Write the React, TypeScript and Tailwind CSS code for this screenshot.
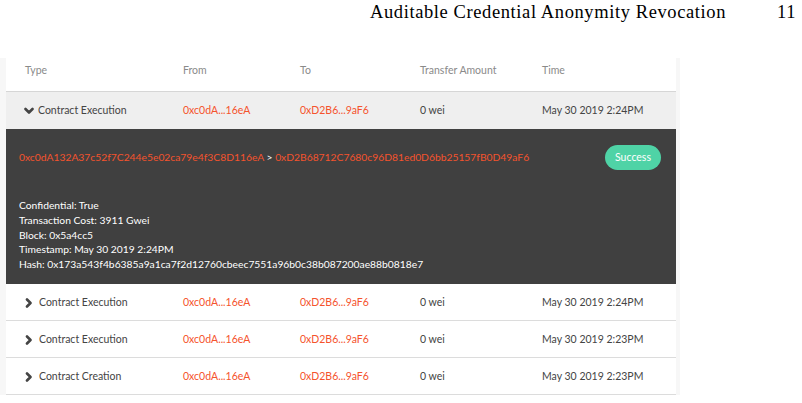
import React from "react";

const font = { fontFamily: "Lato, 'Open Sans', sans-serif" };

function ChevronDown() {
  return (
    <svg width="10" height="8" viewBox="0 0 10 8" className="mr-[4px]">
      <polyline points="1.5,2 5,5.5 8.5,2" fill="none" stroke="#444" strokeWidth="2.6" strokeLinecap="round" strokeLinejoin="round" />
    </svg>
  );
}
function ChevronRight() {
  return (
    <svg width="8" height="10" viewBox="0 0 8 10" className="mr-[6px]">
      <polyline points="2,1.5 5.5,5 2,8.5" fill="none" stroke="#444" strokeWidth="2.6" strokeLinecap="round" strokeLinejoin="round" />
    </svg>
  );
}

type Row = { type: string; time: string };
const rows: Row[] = [
  { type: "Contract Execution", time: "May 30 2019 2:24PM" },
  { type: "Contract Execution", time: "May 30 2019 2:23PM" },
  { type: "Contract Creation", time: "May 30 2019 2:23PM" },
];

const cols = "grid grid-cols-[158px_117px_120px_122px_1fr] items-center pl-[19px]";

export default function App() {
  return (
    <div className="w-[802px] h-[403px] bg-white overflow-hidden relative" style={font}>
      <div className="h-[58px] flex items-start">
        <div
          className="ml-[370px] -mt-[1px] flex text-[18.5px] tracking-[0.6px] text-black"
          style={{ fontFamily: "'Liberation Serif', 'DejaVu Serif', serif" }}
        >
          <span className="w-[407px]">Auditable Credential Anonymity Revocation</span>
          <span>11</span>
        </div>
      </div>
      <div className="w-[680px] bg-[#f7f7f7] pl-[6px] pr-[4px]">
        <div className="bg-white text-[10.5px]">
          <div className={`${cols} h-[34px] pb-[8px] text-[#8a8a8a] border-b border-[#d6d6d6]`}>
            <span>Type</span>
            <span>From</span>
            <span>To</span>
            <span>Transfer Amount</span>
            <span>Time</span>
          </div>
          <div className={`${cols} h-[37px] pt-[1px] bg-[#efefef] text-[#444]`}>
            <span className="flex items-center -ml-[1px]">
              <ChevronDown />
              Contract Execution
            </span>
            <span className="text-[#f5532d]">0xc0dA...16eA</span>
            <span className="text-[#f5532d]">0xD2B6...9aF6</span>
            <span>0 wei</span>
            <span>May 30 2019 2:24PM</span>
          </div>
          <div className="bg-[#404040] h-[155px] pl-[13px] pr-[15px] pt-[16px] text-white text-[10.3px]">
            <div className="flex items-center justify-between h-[25px]">
              <span className="text-[#f5532d]">
                0xc0dA132A37c52f7C244e5e02ca79e4f3C8D116eA <span className="text-white">&gt;</span> 0xD2B68712C7680c96D81ed0D6bb25157fB0D49aF6
              </span>
              <span className="bg-[#4fd3a6] rounded-full h-[25px] w-[56px] flex items-center justify-center text-[10.5px] text-white">
                Success
              </span>
            </div>
            <div className="mt-[28px] flex flex-col leading-[14.8px]">
              <span>Confidential: True</span>
              <span>Transaction Cost: 3911 Gwei</span>
              <span>Block: 0x5a4cc5</span>
              <span>Timestamp: May 30 2019 2:24PM</span>
              <span>Hash: 0x173a543f4b6385a9a1ca7f2d12760cbeec7551a96b0c38b087200ae88b0818e7</span>
            </div>
          </div>
          {rows.map((r, i) => (
            <div key={i} className={`${cols} h-[37px] pt-[2px] text-[#444] border-b border-[#dcdcdc]`}>
              <span className="flex items-center">
                <ChevronRight />
                {r.type}
              </span>
              <span className="text-[#f5532d]">0xc0dA...16eA</span>
              <span className="text-[#f5532d]">0xD2B6...9aF6</span>
              <span>0 wei</span>
              <span>{r.time}</span>
            </div>
          ))}
        </div>
      </div>
    </div>
  );
}
